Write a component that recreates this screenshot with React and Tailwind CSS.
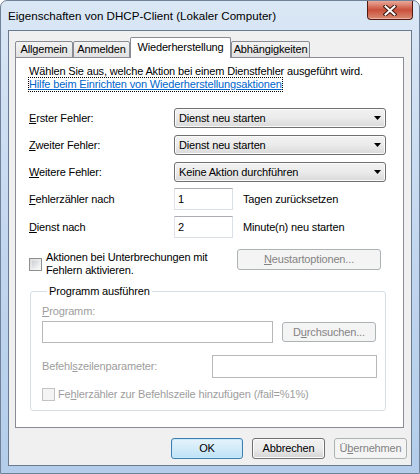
import React from 'react';

const FONT = "font-['Liberation_Sans',Arial,sans-serif]";

function Tab({ label, active, width }) {
  if (active) {
    return (
      <div
        className={`${width} h-[21px] bg-white border border-b-0 border-[#898c95] rounded-t-[2px] flex items-center justify-center pb-[2px] text-black whitespace-nowrap`}
      >
        {label}
      </div>
    );
  }
  return (
    <div
      className={`${width} h-[17px] bg-gradient-to-b from-[#f3f3f3] to-[#e1e1e1] border border-[#898c95] rounded-t-[2px] flex items-center justify-center text-black whitespace-nowrap`}
    >
      {label}
    </div>
  );
}

function ComboBox({ value }) {
  return (
    <div className="w-[212px] h-[20px] rounded-[3px] border border-[#707070] bg-gradient-to-b from-[#f2f2f2] via-[#ebebeb] to-[#d9d9d9] flex items-center pl-[4px] pr-[4px] shadow-[inset_0_0_0_1px_#fbfbfb]">
      <span className="flex-1 text-black">{value}</span>
      <svg width="7" height="4" viewBox="0 0 7 4">
        <polygon points="0,0 7,0 3.5,4" fill="#000" />
      </svg>
    </div>
  );
}

function TextBox({ value, width, height = 'h-[22px]', disabled }) {
  return (
    <div
      className={`${width} ${height} bg-white border ${
        disabled
          ? 'border-[#b8b8b8]'
          : 'border-[#dbdfe6] border-t-[#abadb3] border-l-[#e2e3ea]'
      } flex items-center pl-[3px] text-black`}
    >
      {value}
    </div>
  );
}

function DisabledButton({ children, width, height = 'h-[21px]' }) {
  return (
    <div
      className={`${width} ${height} rounded-[3px] border border-[#adb2b5] bg-[#f4f4f4] flex items-center justify-center text-[#838383]`}
    >
      {children}
    </div>
  );
}

function CheckBox({ disabled }) {
  return (
    <div
      className={`w-[13px] h-[13px] shrink-0 border ${
        disabled ? 'border-[#c3c3c3] bg-[#f4f4f4]' : 'border-[#8e8f8f] bg-gradient-to-br from-[#dcdcdc] to-[#fafafa]'
      } p-[2px]`}
    >
      <div
        className={`w-full h-full ${
          disabled ? 'bg-[#f4f4f4]' : 'bg-gradient-to-br from-[#cbcfd5] to-[#f6f6f6]'
        }`}
      />
    </div>
  );
}

export default function App() {
  return (
    <div className={`${FONT} text-[11px] tracking-[-0.15px] leading-[13px] whitespace-nowrap w-[420px] h-[474px] bg-gradient-to-b from-[#dae7f5] via-[#c3d7ef] to-[#b3cdea] border border-[#6f8299] rounded-t-[7px] flex flex-col px-[7px] pb-[7px] relative`}>
      {/* title bar */}
      <div className="h-[29px] flex items-center text-black text-[11.6px] tracking-normal">
        Eigenschaften von DHCP-Client (Lokaler Computer)
      </div>
      <div className="absolute top-0 right-[6px] w-[46px] h-[19px] rounded-b-[4px] border border-t-0 border-[#4d1b12] bg-gradient-to-b from-[#e8a899] via-[#c9503a] to-[#d98a73] flex items-center justify-center shadow-[inset_0_-1px_0_#eeb3a4]">
        <svg width="14" height="11" viewBox="0 0 14 11">
          <path d="M2.5 1.5 L11.5 9.5 M11.5 1.5 L2.5 9.5" stroke="#3c1a12" strokeWidth="4" strokeLinecap="square" />
          <path d="M2.5 1.5 L11.5 9.5 M11.5 1.5 L2.5 9.5" stroke="#ffffff" strokeWidth="2" strokeLinecap="square" />
        </svg>
      </div>

      {/* client area */}
      <div className="flex-1 bg-[#f0f0f0] border border-[#6a7b90] pl-[6px] pt-[6px] flex flex-col">
        <div className="flex items-end relative z-10">
          <Tab label="Allgemein" width="w-[58px]" />
          <Tab label="Anmelden" width="w-[57px]" />
          <Tab label="Wiederherstellung" width="w-[101px]" active />
          <Tab label="Abhängigkeiten" width="w-[79px]" />
        </div>

        <div className="w-[389px] h-[371px] -mt-px bg-white border border-[#898c95] pl-[13px] pt-[7px] flex flex-col text-black">
          <p>Wählen Sie aus, welche Aktion bei einem Dienstfehler ausgeführt wird.</p>
          <div>
            <span className="inline-block text-[#0066cc] underline outline-dotted outline-1 outline-black">
              Hilfe beim Einrichten von Wiederherstellungsaktionen
            </span>
          </div>

          <div className="mt-[17px] flex flex-col gap-[7px]">
            <div className="flex items-center">
              <span className="w-[145px]"><u>E</u>rster Fehler:</span>
              <ComboBox value="Dienst neu starten" />
            </div>
            <div className="flex items-center">
              <span className="w-[145px]"><u>Z</u>weiter Fehler:</span>
              <ComboBox value="Dienst neu starten" />
            </div>
            <div className="flex items-center">
              <span className="w-[145px]"><u>W</u>eitere Fehler:</span>
              <ComboBox value="Keine Aktion durchführen" />
            </div>
          </div>

          <div className="mt-[6px] flex flex-col gap-[6px]">
            <div className="flex items-center">
              <span className="w-[145px]"><u>F</u>ehlerzähler nach</span>
              <TextBox value="1" width="w-[59px]" />
              <span className="ml-[10px]">Tagen zurücksetzen</span>
            </div>
            <div className="flex items-center">
              <span className="w-[145px]"><u>D</u>ienst nach</span>
              <TextBox value="2" width="w-[59px]" />
              <span className="ml-[10px]">Minute(n) neu starten</span>
            </div>
          </div>

          <div className="mt-[11px] flex items-start">
            <div className="w-[208px] flex items-start">
              <div className="mt-[9px]">
                <CheckBox />
              </div>
              <div className="ml-[4px] mt-[2px]">
                Aktionen bei Unterbrechungen mit
                <br />
                Fehlern aktivieren.
              </div>
            </div>
            <DisabledButton width="w-[144px]">
              <span><u>N</u>eustartoptionen...</span>
            </DisabledButton>
          </div>

          <fieldset className="mt-[8px] ml-[1px] w-[356px] border border-[#d5dfe5] rounded-[3px] pl-[11px] pt-[7px] pb-[9px]">
            <legend className="ml-[5px] px-[2px] text-black">Programm ausführen</legend>
            <div className="text-[#9d9d9d]"><u>P</u>rogramm:</div>
            <div className="mt-[3px] flex items-start">
              <TextBox width="w-[231px]" disabled />
              <div className="ml-[9px] mt-px">
                <DisabledButton width="w-[94px]" height="h-[20px]">
                  <span>D<u>u</u>rchsuchen...</span>
                </DisabledButton>
              </div>
            </div>
            <div className="mt-[12px] flex items-center">
              <span className="w-[170px] text-[#9d9d9d]">Befehl<u>s</u>zeilenparameter:</span>
              <TextBox width="w-[165px]" height="h-[23px]" disabled />
            </div>
            <div className="mt-[10px] flex items-center">
              <CheckBox disabled />
              <span className="ml-[3px] text-[#9d9d9d]">Fe<u>h</u>lerzähler zur Befehlszeile hinzufügen (/fail=%1%)</span>
            </div>
          </fieldset>
        </div>

        {/* dialog buttons */}
        <div className="mt-[10px] flex pl-[156px] gap-[9px]">
          <div className="w-[72px] h-[21px] rounded-[3px] border border-[#3c7fb1] bg-gradient-to-b from-[#e5f3fb] via-[#d3ebf9] to-[#bde2f5] shadow-[inset_0_0_0_1px_#c9e8f8] flex items-center justify-center text-black">
            OK
          </div>
          <div className="w-[73px] h-[21px] rounded-[3px] border border-[#707070] bg-gradient-to-b from-[#f2f2f2] via-[#ebebeb] to-[#d4d4d4] shadow-[inset_0_0_0_1px_#fbfbfb] flex items-center justify-center text-black">
            Abbrechen
          </div>
          <DisabledButton width="w-[73px]">
            <span>Ü<u>b</u>ernehmen</span>
          </DisabledButton>
        </div>
      </div>
    </div>
  );
}
